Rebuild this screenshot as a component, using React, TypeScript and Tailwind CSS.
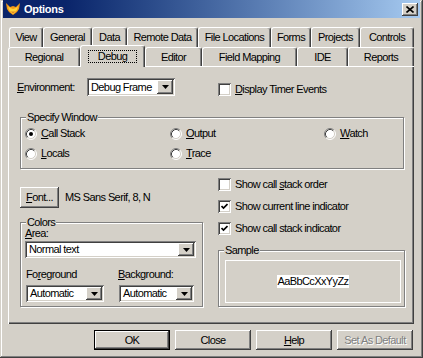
import React from "react";

const raised =
  "shadow-[inset_-1px_-1px_#404040,inset_1px_1px_#ffffff,inset_-2px_-2px_#808080,inset_2px_2px_#d4d0c8]";
const sunken =
  "shadow-[inset_1px_1px_#808080,inset_-1px_-1px_#ffffff,inset_2px_2px_#404040,inset_-2px_-2px_#d4d0c8]";

const topTabs = [
  { label: "View", w: "w-[34px]" },
  { label: "General", w: "w-[49px]" },
  { label: "Data", w: "w-[35px]" },
  { label: "Remote Data", w: "w-[71px]" },
  { label: "File Locations", w: "w-[73px]" },
  { label: "Forms", w: "w-[40px]" },
  { label: "Projects", w: "w-[49px]" },
  { label: "Controls", w: "w-[54px]" },
];

const Tab = ({ label, w }: { label: string; w: string }) => (
  <div
    className={`${w} h-full flex items-center justify-center border-l border-t border-r border-l-white border-t-white border-r-[#404040] rounded-t-[3px] shadow-[inset_-1px_0_#808080] whitespace-nowrap`}
  >
    {label}
  </div>
);

const Combo = ({ value, className }: { value: string; className: string }) => (
  <div className={`flex items-center bg-white p-[2px] ${sunken} ${className}`}>
    <span className="flex-1 pl-[2px] whitespace-nowrap overflow-hidden">{value}</span>
    <div className={`w-[16px] h-full bg-[#d4d0c8] flex items-center justify-center ${raised}`}>
      <svg width="7" height="4" viewBox="0 0 7 4">
        <path d="M0 0h7L3.5 4z" fill="#000" />
      </svg>
    </div>
  </div>
);

const Radio = ({ checked, children }: { checked?: boolean; children: React.ReactNode }) => (
  <div className="flex items-center h-[13px] gap-[4px]">
    <svg width="12" height="12" viewBox="0 0 12 12">
      <circle cx="6" cy="6" r="5" fill="#fff" />
      <path d="M9.89 2.11A5.5 5.5 0 0 0 2.11 9.89" stroke="#808080" fill="none" />
      <path d="M2.11 9.89A5.5 5.5 0 0 0 9.89 2.11" stroke="#fff" fill="none" />
      <path d="M9.18 2.82A4.5 4.5 0 0 0 2.82 9.18" stroke="#404040" fill="none" />
      <path d="M2.82 9.18A4.5 4.5 0 0 0 9.18 2.82" stroke="#d4d0c8" fill="none" />
      {checked && <circle cx="6" cy="6" r="2" fill="#000" />}
    </svg>
    <span>{children}</span>
  </div>
);

const Check = ({ checked, children }: { checked?: boolean; children: React.ReactNode }) => (
  <div className="flex items-center h-[13px] gap-[4px]">
    <div className={`w-[13px] h-[13px] bg-white flex items-center justify-center ${sunken}`}>
      {checked && (
        <svg width="7" height="7" viewBox="0 0 7 7">
          <path d="M0.5 3l2 2 4-4" stroke="#000" strokeWidth="1.7" fill="none" />
        </svg>
      )}
    </div>
    <span>{children}</span>
  </div>
);

const Group = ({
  title,
  className,
  children,
}: {
  title: string;
  className: string;
  children?: React.ReactNode;
}) => (
  <div className={`relative border border-[#808080] shadow-[1px_1px_0_#fff,inset_1px_1px_0_#fff] ${className}`}>
    <span className="absolute -top-[7px] left-[5px] bg-[#d4d0c8] px-[1px] leading-[13px]">{title}</span>
    {children}
  </div>
);

const Button = ({
  children,
  isDefault,
  disabled,
}: {
  children: React.ReactNode;
  isDefault?: boolean;
  disabled?: boolean;
}) => (
  <div
    className={`w-[76px] h-[20px] flex items-center justify-center whitespace-nowrap overflow-hidden ${raised} ${
      isDefault ? "border border-black" : ""
    } ${disabled ? "text-[#808080] [text-shadow:1px_1px_0_#fff]" : ""}`}
  >
    {children}
  </div>
);

export default function App() {
  return (
    <div className="w-[423px] h-[358px] bg-[#d4d0c8] flex flex-col px-[3px] text-[11px] leading-[13px] tracking-[-0.6px] text-black [font-family:'Liberation_Sans',Arial,sans-serif] shadow-[inset_-1px_-1px_#404040,inset_1px_1px_#d4d0c8,inset_-2px_-2px_#808080,inset_2px_2px_#ffffff] overflow-hidden">
      {/* title bar */}
      <div className="h-[18px] shrink-0 flex items-center bg-linear-to-r from-[#0a246a] from-15% to-[#a6caf0] pl-[2px] pr-[2px]">
        <svg width="16" height="14" viewBox="0 0 16 14">
          <path d="M1 1l4 4 3-1 3 1 4-4-1 6-2 3-4 3-4-3-2-3z" fill="#f59a16" />
          <path d="M3 4l2 2 3 1 3-1 2-2-1 4-4 4-4-4z" fill="#ffd33a" />
          <path d="M6 9l2 2 2-2-2 1z" fill="#c0400a" />
        </svg>
        <span className="ml-[3px] text-white font-bold tracking-[-0.3px]">Options</span>
        <div className={`ml-auto w-[16px] h-[13px] bg-[#d4d0c8] flex items-center justify-center ${raised}`}>
          <svg width="8" height="7" viewBox="0 0 8 7">
            <path d="M0.5 0.5l7 6M7.5 0.5l-7 6" stroke="#000" strokeWidth="1.6" />
          </svg>
        </div>
      </div>

      <div className="ml-[5px] mt-[9px] w-[406px] shrink-0">
        {/* tab rows */}
        <div className="flex h-[20px] ml-[1px]">
          {topTabs.map((t) => (
            <Tab key={t.label} {...t} />
          ))}
        </div>
        <div className="flex h-[19px]">
          <Tab label="Regional" w="w-[72px]" />
          <div className="relative z-10 w-[65px] h-[22px] -mt-[2px] bg-[#d4d0c8] flex items-center justify-center border-l border-t border-r border-l-white border-t-white border-r-[#404040] rounded-t-[3px] shadow-[inset_-1px_0_#808080]">
            <span className="border border-dotted border-black px-[9px] leading-[11px]">Debug</span>
          </div>
          <Tab label="Editor" w="w-[57px]" />
          <Tab label="Field Mapping" w="w-[95px]" />
          <Tab label="IDE" w="w-[51px]" />
          <Tab label="Reports" w="w-[66px]" />
        </div>

        {/* panel */}
        <div className="flex flex-col h-[258px] w-[406px] shadow-[inset_1px_1px_#ffffff,inset_-1px_-1px_#404040,inset_-2px_-2px_#808080]">
          <div className="flex items-center h-[18px] mt-[12px]">
            <span className="ml-[9px] w-[70px]">
              <u>E</u>nvironment:
            </span>
            <Combo value="Debug Frame" className="w-[88px] h-[18px]" />
            <div className="ml-[43px] mt-[4px]">
              <Check>
                <u>D</u>isplay Timer Events
              </Check>
            </div>
          </div>

          <Group title="Specify Window" className="ml-[12px] mt-[21px] w-[384px] h-[52px]">
            <div className="grid grid-cols-[145px_154px_1fr] gap-y-[7px] pl-[4px] pt-[9px]">
              <Radio checked>
                <u>C</u>all Stack
              </Radio>
              <Radio>
                <u>O</u>utput
              </Radio>
              <Radio>
                <u>W</u>atch
              </Radio>
              <Radio>
                <u>L</u>ocals
              </Radio>
              <Radio>
                <u>T</u>race
              </Radio>
            </div>
          </Group>

          <div className="flex">
            <div className="ml-[12px] w-[183px]">
              <div className="flex items-center mt-[18px] h-[21px]">
                <div className={`w-[39px] h-[21px] flex items-center justify-center ${raised}`}>
                  <span>
                    <u>F</u>ont...
                  </span>
                </div>
                <span className="ml-[6px]">MS Sans Serif, 8, N</span>
              </div>
              <Group title="Colors" className="mt-[14px] h-[85px] w-[183px]">
                <div className="pl-[4px] pt-[4px]">
                  <div>
                    <u>A</u>rea:
                  </div>
                  <Combo value="Normal text" className="mt-[1px] w-[171px] h-[17px]" />
                  <div className="flex mt-[10px]">
                    <span className="w-[93px] pl-[1px]">
                      Fo<u>r</u>eground
                    </span>
                    <span>
                      <u>B</u>ackground:
                    </span>
                  </div>
                  <div className="flex mt-[4px] pl-[1px]">
                    <Combo value="Automatic" className="w-[78px] h-[17px]" />
                    <Combo value="Automatic" className="ml-[15px] w-[75px] h-[17px]" />
                  </div>
                </div>
              </Group>
            </div>

            <div className="ml-[15px] w-[187px]">
              <div className="flex flex-col gap-[9px] mt-[9px]">
                <Check>
                  Show call <u>s</u>tack order
                </Check>
                <Check checked>Show current line indicator</Check>
                <Check checked>Show call stack indicator</Check>
              </div>
              <Group title="Sample" className="mt-[15px] h-[57px] w-[187px]">
                <div className="ml-[6px] mt-[9px] w-[176px] h-[43px] border border-white flex items-center justify-center">
                  <span className="bg-white">AaBbCcXxYyZz</span>
                </div>
              </Group>
            </div>
          </div>
        </div>
      </div>

      {/* bottom buttons */}
      <div className="flex gap-[5px] ml-[91px] mt-[6px]">
        <Button isDefault>OK</Button>
        <Button>Close</Button>
        <Button>
          <u>H</u>elp
        </Button>
        <Button disabled>Set As Default</Button>
      </div>
    </div>
  );
}
